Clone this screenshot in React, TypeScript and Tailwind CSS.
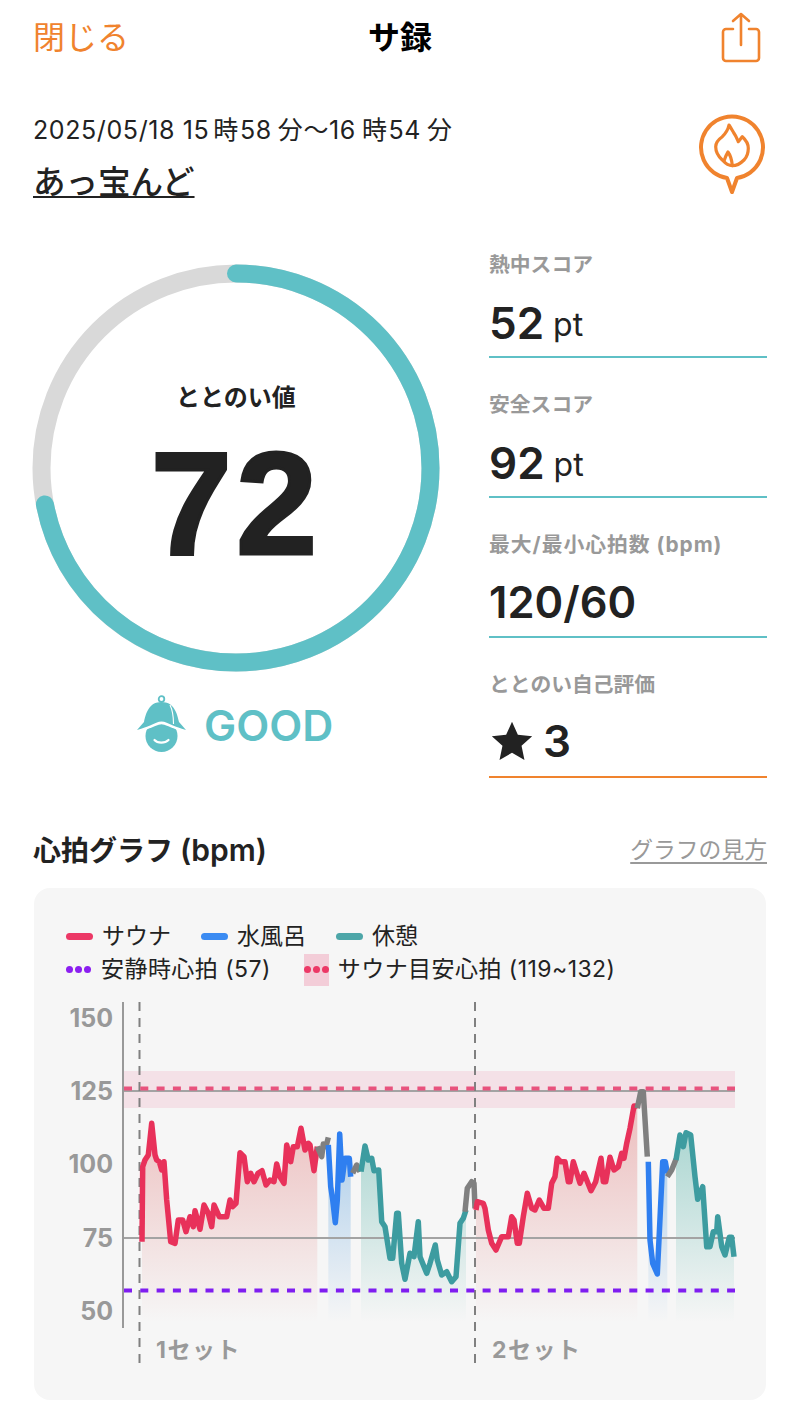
import type React from "react";

type Pt = [number, number];

// points were read off two crops of the graph, so each has its own origin
const left = (pts: Pt[]): Pt[] => pts.map(([x, y]) => [60 + x / 3, 1000 + y / 3]);
const right = (pts: Pt[]): Pt[] => pts.map(([x, y]) => [430 + x / 3, 1000 + y / 3]);
const toStr = (pts: Pt[]) => pts.map(([x, y]) => `${x.toFixed(1)},${y.toFixed(1)}`).join(" ");

const RED = "#e8315a";
const BLUE = "#2f7ff0";
const TEAL = "#3d9ca0";
const GRAY = "#808080";

const sauna1 = left([[246,725],[248,500],[255,480],[265,465],[275,370],[285,465],[290,480],[298,485],[305,510],[312,485],[320,600],[332,725],[345,730],[355,660],[368,660],[378,695],[390,650],[400,680],[405,632],[420,688],[432,615],[445,640],[455,680],[462,615],[478,650],[500,650],[510,600],[518,620],[528,610],[540,458],[552,470],[562,545],[572,520],[582,545],[594,520],[606,512],[618,555],[630,540],[642,545],[650,492],[660,530],[672,550],[680,435],[692,485],[700,440],[712,440],[723,385],[735,450],[745,430],[750,435],[762,512],[772,440]]);
const gray1 = left([[772,440],[785,470],[790,432],[798,440],[805,412]]);
const blue1 = left([[805,435],[812,560],[818,600],[826,668],[832,600],[839,402],[846,540],[855,475],[868,475],[872,530]]);
const gray2 = left([[878,520],[890,495],[900,515]]);
const teal1 = [
  ...left([[903,515],[915,438],[925,480],[935,475],[942,512],[956,510],[965,665],[975,680],[990,775],[998,775],[1010,640],[1015,640],[1025,790],[1035,838],[1050,760],[1062,770],[1075,665],[1080,770],[1100,820]]),
  ...right([[0,790],[16,735],[22,780],[35,825],[50,815],[65,845],[78,830],[90,670],[100,655],[108,630]]),
];
const gray3 = right([[105,635],[112,565],[125,545],[132,550],[135,625]]);
const sauna2 = right([[138,630],[142,605],[160,610],[165,625],[175,690],[185,730],[198,750],[215,710],[235,710],[245,650],[252,660],[262,730],[268,730],[280,650],[292,580],[305,625],[315,630],[328,600],[342,625],[355,625],[365,550],[375,530],[382,475],[392,485],[405,485],[415,545],[420,545],[430,485],[450,550],[462,520],[483,572],[497,545],[513,475],[520,545],[527,545],[540,472],[552,510],[565,500],[575,460],[582,475],[590,430],[600,385],[612,318],[622,318]]);
const gray4 = right([[622,325],[632,275],[640,275],[652,470]]);
const blue2 = right([[655,485],[660,720],[668,790],[682,822],[688,700],[698,485],[706,485],[712,520]]);
const gray5 = right([[712,530],[725,510],[738,478]]);
const teal2 = right([[738,480],[750,405],[760,440],[768,398],[782,405],[795,530],[803,598],[818,560],[830,740],[840,740],[850,695],[860,695],[863,650],[875,740],[885,765],[898,712],[905,712],[912,770]]);

const areas: { pts: Pt[]; fill: string }[] = [
  { pts: sauna1, fill: "url(#fadeRed)" },
  { pts: blue1, fill: "url(#fadeBlue)" },
  { pts: teal1, fill: "url(#fadeTeal)" },
  { pts: sauna2, fill: "url(#fadeRed)" },
  { pts: blue2, fill: "url(#fadeBlue)" },
  { pts: teal2, fill: "url(#fadeTeal)" },
];

const lines: { pts: Pt[]; color: string }[] = [
  { pts: sauna1, color: RED },
  { pts: gray1, color: GRAY },
  { pts: blue1, color: BLUE },
  { pts: gray2, color: GRAY },
  { pts: teal1, color: TEAL },
  { pts: gray3, color: GRAY },
  { pts: sauna2, color: RED },
  { pts: gray4, color: GRAY },
  { pts: blue2, color: BLUE },
  { pts: gray5, color: GRAY },
  { pts: teal2, color: TEAL },
];

const Fade: React.FC<{ id: string; color: string; opacity: number }> = ({ id, color, opacity }) => (
  <linearGradient id={id} gradientUnits="userSpaceOnUse" x1="0" y1="1110" x2="0" y2="1322">
    <stop offset="0" stopColor={color} stopOpacity={opacity} />
    <stop offset="1" stopColor={color} stopOpacity="0" />
  </linearGradient>
);

const HeartChart = () => (
  <svg viewBox="34 1000 733 385" width="733" height="385" className="block mt-[14px]">
    <defs>
      <Fade id="fadeRed" color="#d9504f" opacity={0.33} />
      <Fade id="fadeBlue" color="#3c8fd8" opacity={0.45} />
      <Fade id="fadeTeal" color="#3da89c" opacity={0.45} />
    </defs>
    <rect x="124" y="1071" width="611" height="37" fill="#f4e1e7" />
    {areas.map(({ pts, fill }, i) => {
      const first = pts[0][0];
      const last = pts[pts.length - 1][0];
      return (
        <polygon
          key={i}
          points={`${first},1322 ${toStr(pts)} ${last},1322`}
          fill={fill}
        />
      );
    })}
    <line x1="124" y1="1091" x2="735" y2="1091" stroke="#a3a3a3" strokeWidth="2" />
    <line x1="124" y1="1238" x2="735" y2="1238" stroke="#a3a3a3" strokeWidth="2" />
    <line x1="123" y1="1002" x2="123" y2="1328" stroke="#999999" strokeWidth="2" />
    <line x1="139.5" y1="1002" x2="139.5" y2="1368" stroke="#808080" strokeWidth="2" strokeDasharray="9 7" />
    <line x1="475" y1="1002" x2="475" y2="1368" stroke="#808080" strokeWidth="2" strokeDasharray="9 7" />
    <line x1="124" y1="1088.5" x2="735" y2="1088.5" stroke="#e8527d" strokeWidth="4" strokeDasharray="8 8.3" />
    <line x1="124" y1="1290.5" x2="735" y2="1290.5" stroke="#7f1df0" strokeWidth="4" strokeDasharray="8 8.3" />
    {lines.map(({ pts, color }, i) => (
      <polyline key={i} points={toStr(pts)} fill="none" stroke={color} strokeWidth="5.5" strokeLinejoin="round" />
    ))}
    {[
      ["150", 1027],
      ["125", 1100],
      ["100", 1173],
      ["75", 1247],
      ["50", 1320],
    ].map(([label, y]) => (
      <text key={label} x="113" y={y} textAnchor="end" fontSize="25" fontWeight="700" fill="#999999">
        {label}
      </text>
    ))}
    <text x="156" y="1358" fontSize="23" fontWeight="700" fill="#999999" letterSpacing="1.5">1セット</text>
    <text x="492" y="1358" fontSize="23" fontWeight="700" fill="#999999" letterSpacing="1.5">2セット</text>
  </svg>
);

const Stat: React.FC<{ label: string; border: string; labelClass?: string; children: React.ReactNode }> = ({ label, border, labelClass, children }) => (
  <div className={`h-[140px] flex flex-col border-b-2 ${border}`}>
    <div className={`mt-[35px] h-[24px] leading-[24px] text-[20.8px] font-bold text-[#999999] whitespace-nowrap ${labelClass ?? ""}`}>{label}</div>
    <div className="mt-[18px] h-[56px] flex items-center text-[#222222] font-semibold">{children}</div>
  </div>
);

const Pill: React.FC<{ color: string; label: string }> = ({ color, label }) => (
  <div className="flex items-center gap-[9px]">
    <span className={`w-[27px] h-[7px] rounded-full ${color}`} />
    <span>{label}</span>
  </div>
);

const Dots: React.FC<{ color: string }> = ({ color }) => (
  <span className="flex gap-[2px]">
    <span className={`w-[7px] h-[7px] rounded-full ${color}`} />
    <span className={`w-[7px] h-[7px] rounded-full ${color}`} />
    <span className={`w-[7px] h-[7px] rounded-full ${color}`} />
  </span>
);

const App = () => {
  return (
    <div className="w-[800px] h-[1415px] bg-white overflow-hidden text-[#222222] font-['Inter','Noto_Sans_CJK_JP',sans-serif]">
      <header className="h-[75px] px-[34px] grid grid-cols-3 items-center">
        <span className="text-[32px] text-[#f0832e] -ml-[1px]">閉じる</span>
        <span className="text-center text-[32px] font-bold text-black">サ録</span>
        <svg viewBox="0 0 40 52" width="40" height="52" className="justify-self-end mt-[1px] mr-[5px]" fill="none" stroke="#f0832e" strokeWidth="2.6" strokeLinecap="round" strokeLinejoin="round">
          <path d="M12 17H5a3 3 0 0 0-3 3v26a3 3 0 0 0 3 3h30a3 3 0 0 0 3-3V20a3 3 0 0 0-3-3h-7" />
          <path d="M20 33V2M12 9l8-7 8 7" />
        </svg>
      </header>

      <section className="px-[33px] flex justify-between">
        <div>
          <div className="mt-[38px] h-[34px] leading-[34px] text-[25px] tracking-[0.6px] whitespace-nowrap">
            2025/05/18 15<span className="ml-[4px] mr-[1px]">時</span>58<span className="ml-[6px]">分</span>〜16<span className="ml-[6px] mr-[1px]">時</span>54<span className="ml-[6px]">分</span>
          </div>
          <div className="mt-[14px] text-[32.5px] leading-[44px] font-medium underline underline-offset-[2px] decoration-2 w-fit">あっ宝んど</div>
        </div>
        <svg viewBox="0 0 70 82" width="70" height="82" className="mt-[37px]" fill="none" stroke="#f0832e" strokeLinejoin="round" strokeLinecap="round">
          <path strokeWidth="4" d="M30 66 A31 31 0 1 1 40 66 L35 80 Z" />
          <path strokeWidth="3.2" d="M32 13C34 16 35 18 37 21.3 39 24 40 27 41.3 29.7 43 28 44 26 45.3 24.7 49 28 51.3 32 51.3 36.3 51.3 41 50 45 47 48 44 51 40 53.7 35.3 53.7 31 53.7 28 51 25.3 48 21 44 18.7 39 18.7 34.7 18.7 30 22 27 25.3 24.7 29 21 31 18 32 13Z" />
          <path strokeWidth="3.2" d="M27 49C28 46 29 43 31 40 34 44 35 50 35.3 53.7" />
        </svg>
      </section>

      <section className="mt-[13px] h-[560px] flex">
        <div className="w-[489px] shrink-0 pl-[32px]">
          <div className="relative w-[408px] h-[408px] mt-[46px]">
            <svg viewBox="0 0 408 408" width="408" height="408" className="block">
              <circle cx="204" cy="204" r="194.5" fill="none" stroke="#d9d9d9" strokeWidth="18" />
              <circle
                cx="204"
                cy="204"
                r="194.5"
                fill="none"
                stroke="#5fc0c6"
                strokeWidth="18"
                strokeLinecap="round"
                pathLength={100}
                strokeDasharray="72 100"
                transform="rotate(-90 204 204)"
              />
            </svg>
            <div className="absolute inset-0 flex flex-col items-center">
              <div className="mt-[116px] h-[36px] leading-[36px] text-[24px] font-bold">ととのい値</div>
              <div className="mt-[13px] text-[146px] leading-[150px] tracking-[4px] font-bold text-[#222222] font-['Liberation_Sans',sans-serif] [-webkit-text-stroke:3px_#222222]">72</div>
            </div>
          </div>
          <div className="mt-[23px] ml-[105px] flex items-center gap-[17px]">
            <svg viewBox="0 0 50 60" width="50" height="60" className="block">
              <circle cx="24.5" cy="4" r="2.8" fill="none" stroke="#5fc0c6" strokeWidth="1.8" />
              <circle cx="24.5" cy="41" r="16" fill="#5fc0c6" />
              <path d="M0 36C6 33.500 10 32.500 13 31.500 18 29.500 21 27.500 24.500 27.500 28 27.500 31 29.500 36 31.500 39 32.500 43 33.500 49 36" fill="none" stroke="#ffffff" strokeWidth="3.4" />
              <path d="M24.5 7C12 7 9 18 7 27L0 35C6 33 10 32 13 30.5 18 28.5 21 26.5 24.5 26.5 28 26.5 31 28.5 36 30.5 39 32 43 33 49 35L42 27C40 18 37 7 24.5 7Z" fill="#5fc0c6" />
              <path d="M17.5 45c3 3.5 10.500 3.500 14 0" fill="none" stroke="#ffffff" strokeWidth="2.2" strokeLinecap="round" />
              <path d="M33 10c2.500 5 3.500 11 3.500 19" fill="none" stroke="#ffffff" strokeWidth="1.1" />
            </svg>
            <span className="text-[43px] leading-[60px] font-semibold text-[#5fc0c6]">GOOD</span>
          </div>
        </div>

        <div className="w-[278px]">
          <Stat label="熱中スコア" border="border-[#5fc0c6]">
            <span className="text-[44px]">52</span>
            <span className="ml-[9px] mt-[4px] text-[32px] font-normal">pt</span>
          </Stat>
          <Stat label="安全スコア" border="border-[#5fc0c6]">
            <span className="text-[44px]">92</span>
            <span className="ml-[9px] mt-[4px] text-[32px] font-normal">pt</span>
          </Stat>
          <Stat label="最大/最小心拍数 (bpm)" labelClass="tracking-[1px]" border="border-[#5fc0c6]">
            <span className="text-[43.5px]">120/60</span>
          </Stat>
          <Stat label="ととのい自己評価" border="border-[#f0832e]">
            <svg viewBox="0 0 24 24" width="44" height="44" className="ml-[1px] -mt-[4px]" fill="#222222">
              <path d="M12 1.5l3.2 7.1 7.8.8-5.8 5.2 1.6 7.7L12 18.400l-6.800 3.900 1.600-7.700L1 9.400l7.800-.8z" />
            </svg>
            <span className="ml-[9px] -mt-[5px] text-[44px] font-semibold">3</span>
          </Stat>
        </div>
      </section>

      <section className="mt-[52px] px-[33px]">
        <div className="h-[40px] flex items-center justify-between">
          <h2 className="text-[28px] font-semibold">心拍グラフ <span className="text-[30px]">(bpm)</span></h2>
          <a className="text-[22.8px] text-[#999999] underline underline-offset-[4px]">グラフの見方</a>
        </div>
      </section>

      <section className="mt-[18px] mx-[34px] h-[512px] rounded-[16px] bg-[#f6f6f6] overflow-hidden">
        <div className="pt-[32px] pl-[32px] text-[23px] text-[#222222]">
          <div className="h-[33px] flex items-center gap-[30px]">
            <Pill color="bg-[#ec3866]" label="サウナ" />
            <Pill color="bg-[#3b8bf2]" label="水風呂" />
            <Pill color="bg-[#4da6a8]" label="休憩" />
          </div>
          <div className="h-[33px] flex items-center tracking-[0.45px]">
            <Dots color="bg-[#8b1ff0]" />
            <span className="ml-[10px]">安静時心拍 (57)</span>
            <span className="ml-[33px] w-[25px] h-[32px] bg-[#f3cdd8] flex items-center justify-center">
              <Dots color="bg-[#ec3866]" />
            </span>
            <span className="ml-[9px]">サウナ目安心拍 (119~132)</span>
          </div>
        </div>
        <HeartChart />
      </section>
    </div>
  );
};

export default App;
